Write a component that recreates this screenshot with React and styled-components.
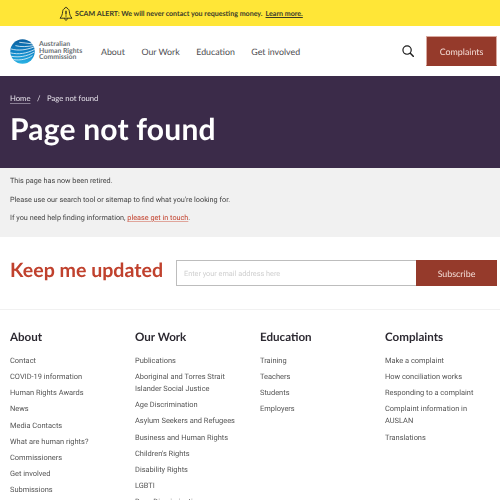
import React from 'react';
import styled, { createGlobalStyle } from 'styled-components';

const GlobalStyle = createGlobalStyle`
    html, body {
        margin: 0;
        padding: 0;
        background: #fff;
        overflow: hidden;
    }
    * {
        box-sizing: border-box;
    }
`;

const headingFont = `Lato, "Open Sans", sans-serif`;
const bodyFont = `Roboto, "Liberation Sans", sans-serif`;

// the slight blur matches the soft, scaled-down look of the reference
const Page = styled.div`
    width: 500px;
    height: 500px;
    overflow: hidden;
    font-family: ${bodyFont};
    text-rendering: geometricPrecision;
    filter: blur(0.3px);
`;

const AlertBar = styled.div`
    height: 26px;
    background: #ffe637;
    display: flex;
    align-items: center;
    gap: 2px;
    color: #3a3a2a;
    font-family: ${headingFont};
    font-size: 7.1px;
    font-weight: 700;
    padding-left: 59px;
`;

const AlertLink = styled.a`
    text-decoration: underline;
    margin-left: 1px;
`;

const Nav = styled.nav`
    height: 50px;
    display: flex;
    align-items: center;
    padding: 0 0 0 10px;
    background: #fff;
`;

const Logo = styled.div`
    display: flex;
    align-items: center;
    gap: 4px;
    width: 91px;
`;

const LogoText = styled.div`
    font-family: ${headingFont};
    font-size: 6.9px;
    line-height: 6.5px;
    font-weight: 700;
    color: #6a6f73;
`;

const NavLinks = styled.div`
    display: flex;
    gap: 16.5px;
    font-family: ${headingFont};
    font-size: 8.8px;
    color: #4c4c50;
`;

const SearchButton = styled.div`
    margin-left: auto;
    display: flex;
    margin-right: 12px;
`;

const ComplaintsButton = styled.div`
    width: 71px;
    height: 30px;
    margin-right: 3px;
    background: #953a2b;
    border: 1px solid #d9a9a0;
    border-bottom-color: #953a2b;
    color: #f3dcd6;
    font-family: ${headingFont};
    font-size: 8.9px;
    display: flex;
    align-items: center;
    justify-content: center;
`;

const Hero = styled.section`
    height: 92px;
    background: #3b2b49;
    padding: 17px 10px 0;
    color: #fff;
`;

const Breadcrumb = styled.div`
    display: flex;
    gap: 6.5px;
    font-family: ${headingFont};
    font-size: 7.7px;
    line-height: 11px;
    color: #e6e2ea;
`;

const Crumb = styled.span`
    text-decoration: ${(props) => (props.$link ? 'underline' : 'none')};
    text-decoration-color: #8a7f95;
    text-underline-offset: 2px;
`;

const Title = styled.h1`
    margin: 5px 0 0;
    font-family: ${headingFont};
    font-size: 30px;
    line-height: 40px;
    font-weight: 700;
    letter-spacing: 0.2px;
`;

const Notice = styled.section`
    height: 69px;
    background: #f1f1f1;
    padding: 7px 10px 0;
    color: #444;
    font-size: 7.27px;
`;

const NoticeLine = styled.p`
    margin: 0 0 7.5px;
    line-height: 11px;
`;

const NoticeLink = styled.a`
    color: #c2412d;
    text-decoration: underline;
    text-decoration-color: #e0a59b;
`;

const Subscribe = styled.section`
    height: 73px;
    display: flex;
    align-items: flex-start;
    padding: 23px 0 0 10px;
    border-bottom: 1px solid #f1f1f1;
`;

const SubscribeTitle = styled.h2`
    margin: -1px 0 0;
    width: 166px;
    flex: none;
    font-family: ${headingFont};
    font-size: 19.6px;
    line-height: 24px;
    font-weight: 700;
    color: #c0412d;
`;

const EmailInput = styled.div`
    width: 240px;
    height: 26px;
    border: 1px solid #bdbdbd;
    border-right: none;
    padding-left: 7px;
    font-size: 7.3px;
    color: #cfcfcf;
    display: flex;
    align-items: center;
`;

const SubscribeButton = styled.div`
    width: 81px;
    height: 26px;
    background: #953a2b;
    color: #f3dcd6;
    font-family: ${headingFont};
    font-size: 8.9px;
    display: flex;
    align-items: center;
    justify-content: center;
`;

const Footer = styled.footer`
    display: grid;
    grid-template-columns: repeat(4, 125px);
    padding: 21px 0 0 10px;
`;

const ColumnTitle = styled.h3`
    margin: 0 0 10px;
    font-family: ${headingFont};
    font-size: 11.6px;
    line-height: 14px;
    font-weight: 700;
    color: #2d2a32;
`;

const LinkList = styled.ul`
    margin: 0;
    padding: 0;
    list-style: none;
`;

const LinkItem = styled.li`
    font-size: 7.45px;
    line-height: 12px;
    margin-bottom: 4.15px;
    color: #555;
    padding-right: 18px;
`;

const columns = [
    {
        title: 'About',
        links: ['Contact', 'COVID-19 information', 'Human Rights Awards', 'News', 'Media Contacts', 'What are human rights?', 'Commissioners', 'Get involved', 'Submissions'],
    },
    {
        title: 'Our Work',
        links: ['Publications', 'Aboriginal and Torres Strait Islander Social Justice', 'Age Discrimination', 'Asylum Seekers and Refugees', 'Business and Human Rights', "Children's Rights", 'Disability Rights', 'LGBTI', 'Race Discrimination'],
    },
    {
        title: 'Education',
        links: ['Training', 'Teachers', 'Students', 'Employers'],
    },
    {
        title: 'Complaints',
        links: ['Make a complaint', 'How conciliation works', 'Responding to a complaint', 'Complaint information in AUSLAN', 'Translations'],
    },
];

const BellIcon = () => (
    <svg width="14" height="15" viewBox="0 0 14 15" fill="none" stroke="#26241a" strokeWidth="0.9" strokeLinejoin="round">
        <path d="M7 1.2c.7 0 1 .5 1 1.1 1.6.5 2.3 1.9 2.4 3.5.1 2.5.9 4.6 2.6 6.4H1c1.7-1.8 2.5-3.9 2.6-6.4.1-1.6.8-3 2.4-3.5 0-.6.3-1.1 1-1.1z" />
        <path d="M5.5 12.4c0 1 .7 1.7 1.500 1.700s1.500-.7 1.500-1.700" />
        <path d="M7 4.700v3.800M7 9.500v1" strokeWidth="1.300" />
    </svg>
);

const GlobeIcon = () => (
    <svg width="25" height="25" viewBox="0 0 26 26">
        <defs>
            <linearGradient id="globe" x1="0" y1="0" x2="0" y2="1">
                <stop offset="0" stopColor="#0b5f9e" />
                <stop offset="0.55" stopColor="#1187c9" />
                <stop offset="1" stopColor="#2bb3e4" />
            </linearGradient>
        </defs>
        <circle cx="13" cy="13" r="12.7" fill="url(#globe)" />
        <g fill="none" stroke="#fff" strokeWidth="0.9" strokeLinecap="round" opacity="0.85">
            <path d="M10 3.500c4 .8 9 .6 13 1.500" />
            <path d="M6 7c5 1.500 12 1 19 -.2" />
            <path d="M1.500 10.500c7 2 15 1 23-2" />
            <path d="M.8 14.500c8 2 17 .5 24.500-3.500" />
            <path d="M1.500 18c8 1.500 16 0 23-4" />
            <path d="M4 21.500c7 1 14-.5 19-4" />
        </g>
    </svg>
);

const SearchIcon = () => (
    <svg width="12" height="12" viewBox="0 0 13 13" fill="none" stroke="#1c1c1c" strokeWidth="1.3" strokeLinecap="round">
        <circle cx="5.5" cy="5.5" r="4.5" />
        <path d="M9 9l3.2 3.2" strokeWidth="1.6" />
    </svg>
);

const App = () => {
    return (
        <Page>
            <GlobalStyle />
            <AlertBar>
                <BellIcon />
                <span>SCAM ALERT: We will never contact you requesting money.</span>
                <AlertLink>Learn more.</AlertLink>
            </AlertBar>
            <Nav>
                <Logo>
                    <GlobeIcon />
                    <LogoText>
                        Australian
                        <br />
                        Human Rights
                        <br />
                        Commission
                    </LogoText>
                </Logo>
                <NavLinks>
                    <span>About</span>
                    <span>Our Work</span>
                    <span>Education</span>
                    <span>Get involved</span>
                </NavLinks>
                <SearchButton>
                    <SearchIcon />
                </SearchButton>
                <ComplaintsButton>Complaints</ComplaintsButton>
            </Nav>
            <Hero>
                <Breadcrumb>
                    <Crumb $link>Home</Crumb>
                    <span>/</span>
                    <span>Page not found</span>
                </Breadcrumb>
                <Title>Page not found</Title>
            </Hero>
            <Notice>
                <NoticeLine>This page has now been retired.</NoticeLine>
                <NoticeLine>Please use our search tool or sitemap to find what you're looking for.</NoticeLine>
                <NoticeLine>
                    If you need help finding information, <NoticeLink>please get in touch</NoticeLink>.
                </NoticeLine>
            </Notice>
            <Subscribe>
                <SubscribeTitle>Keep me updated</SubscribeTitle>
                <EmailInput>Enter your email address here</EmailInput>
                <SubscribeButton>Subscribe</SubscribeButton>
            </Subscribe>
            <Footer>
                {columns.map((column) => (
                    <div key={column.title}>
                        <ColumnTitle>{column.title}</ColumnTitle>
                        <LinkList>
                            {column.links.map((link) => (
                                <LinkItem key={link}>{link}</LinkItem>
                            ))}
                        </LinkList>
                    </div>
                ))}
            </Footer>
        </Page>
    );
};

export default App;
